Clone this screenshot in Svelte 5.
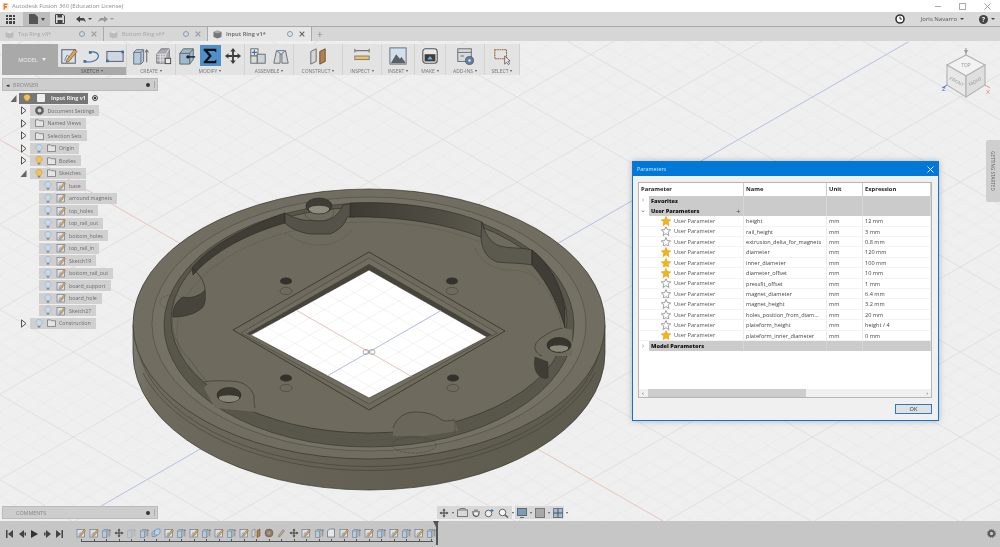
<script>
  const OX = 369, OY = 352, A = 0.575;
  function lines(step, from, to) {
    const out = [];
    for (let k = from; k <= to; k++) {
      const d = k * step;
      out.push([0, OY + A * (0 - OX) + d, 1000, OY + A * (1000 - OX) + d]);
      out.push([0, OY - A * (0 - OX) + d, 1000, OY - A * (1000 - OX) + d]);
    }
    return out;
  }
  const minor = lines(17, -50, 50);
  const major = lines(85, -10, 10);

  const tree = [
    { d: 0, exp: 'r', icon: 'gear', label: 'Document Settings' },
    { d: 0, exp: 'r', icon: 'folder', label: 'Named Views' },
    { d: 0, exp: 'r', icon: 'folder', label: 'Selection Sets' },
    { d: 0, exp: 'r', bulb: 'off', icon: 'folder', label: 'Origin' },
    { d: 0, exp: 'r', bulb: 'on', icon: 'folder', label: 'Bodies' },
    { d: 0, exp: 'd', bulb: 'on', icon: 'folder', label: 'Sketches' },
    ...['base', 'arround magnets', 'top_holes', 'top_rail_out', 'bottom_holes', 'top_rail_in', 'Sketch19', 'bottom_rail_out', 'board_support', 'board_hole', 'Sketch27'].map((label) => ({ d: 1, bulb: 'off', icon: 'sketch', label })),
    { d: 0, exp: 'r', bulb: 'off', icon: 'folder', label: 'Construction' }
  ];

  const params = [
    ['height', '12 mm', 1], ['rail_height', '3 mm', 0], ['extrusion_delta_for_magnets', '0.8 mm', 0],
    ['diameter', '120 mm', 1], ['inner_diameter', '100 mm', 1], ['diameter_offset', '10 mm', 1],
    ['pressfit_offset', '1 mm', 0], ['magnet_diameter', '6.4 mm', 0], ['magnet_height', '3.2 mm', 0],
    ['holes_position_from_diam...', '20 mm', 0], ['plateform_height', 'height / 4', 0], ['plateform_inner_diameter', '0 mm', 1]
  ];

  const ribbon = [
    { label: 'SKETCH', w: 69, dark: true, icons: ['sketch', 'arc', 'rect'] },
    { label: 'CREATE', w: 49, icons: ['extrude', 'grid'] },
    { label: 'MODIFY', w: 69, icons: ['press', 'sigma', 'move'] },
    { label: 'ASSEMBLE', w: 49, icons: ['joint', 'assem'] },
    { label: 'CONSTRUCT', w: 49, icons: ['plane'] },
    { label: 'INSPECT', w: 39, icons: ['measure'] },
    { label: 'INSERT', w: 33, icons: ['picture'] },
    { label: 'MAKE', w: 31, icons: ['make'] },
    { label: 'ADD-INS', w: 39, icons: ['addin'] },
    { label: 'SELECT', w: 35, icons: ['select'] }
  ];

  const tl = ['sketch','sketch','extrude','move','extrudeL','extrude','combine','sketch','extrude','sketch','extrude','sketch','extrude','sketch','plane','thread','pen','move','sketch','extrude','fillet','sketch','extrude','sketch','extrude','sketch','extrude','sketch','extrude'];

  const smallHoles = [[286, 281], [452, 281], [286, 378], [453, 378]];
</script>

{#snippet icon(k, s)}
  <svg class="ic" width={s} height={s} viewBox="0 0 20 20">
    {#if k === 'sketch'}
      <rect x="2" y="3" width="15" height="15" fill="#d9e2ea" stroke="#667" stroke-width="1.2"/>
      <path d="M5 15 L8 9 L13 13" fill="none" stroke="#5a7fa5" stroke-width="1"/>
      <path d="M7 15 L16 3 L19 5 L10 16 L7 17Z" fill="#e8a33a" stroke="#555" stroke-width=".7"/>
    {:else if k === 'arc'}
      <path d="M2 16 C8 18 18 15 17 9 C16 5 10 5 8 6" fill="none" stroke="#3c6fa8" stroke-width="1.3"/>
      <rect x="0.5" y="14.5" width="3" height="3" fill="#3c6fa8"/><rect x="6.5" y="4.5" width="3" height="3" fill="#3c6fa8"/>
    {:else if k === 'rect'}
      <rect x="1" y="5" width="18" height="11" fill="#cfd8e0" stroke="#667" stroke-width="1.2"/>
      <rect x="0" y="14" width="3" height="3" fill="#3c6fa8"/><rect x="17" y="4" width="3" height="3" fill="#3c6fa8"/>
    {:else if k === 'extrude' || k === 'extrudeL'}
      <g opacity={k === 'extrudeL' ? .35 : 1}>
        <path d="M3 6 L6 3 L14 3 L14 16 L11 19 L3 19Z" fill="#b7cbdc" stroke="#5d6d7a" stroke-width="1"/>
        <path d="M3 6 L11 6 L14 3 M11 6 L11 19" fill="none" stroke="#5d6d7a" stroke-width="1"/>
        <path d="M17.5 17 V4 M15.7 6 L17.5 3 L19.3 6" fill="none" stroke="#555" stroke-width="1"/>
      </g>
    {:else if k === 'grid'}
      <path d="M3 8 L8 2 H17 V12 L12 18 H3Z" fill="#a9a9b5" stroke="#777" stroke-width="1"/>
      <path d="M3 11 H13 M3 14.5 H13 M7 8 V18 M10 8 V18 M3 8 H13 L17 2 M13 8 V18" stroke="#f2f2f2" stroke-width=".8" fill="none"/>
      <rect x="12.5" y="12.5" width="6" height="6" fill="#e8e8e8" stroke="#444"/>
    {:else if k === 'press'}
      <path d="M2 7 L6 2 H17 V14 L13 19 H2Z" fill="#9fb9cf" stroke="#566" stroke-width="1"/>
      <path d="M2 7 H13 L17 2 M13 7 V19" fill="none" stroke="#566" stroke-width="1"/>
      <path d="M11 11 H19" stroke="#222" stroke-width="1.6"/><circle cx="11" cy="11" r="1.8" fill="#222"/>
    {:else if k === 'sigma'}
      <path d="M3 2 H17 V6 L15 4.5 H7.5 L12 10 L7 15.5 H15 L17 14 V18 H3 V16.5 L8.8 10 L3 3.5Z" fill="#111"/>
    {:else if k === 'move'}
      <path d="M10 1 L13 5 H11 V9 H15 V7 L19 10 L15 13 V11 H11 V15 H13 L10 19 L7 15 H9 V11 H5 V13 L1 10 L5 7 V9 H9 V5 H7Z" fill="#3d3d3d"/>
    {:else if k === 'joint'}
      <rect x="2" y="2" width="8" height="8" fill="#e8e8e8" stroke="#666"/>
      <rect x="9" y="8" width="9" height="10" fill="#c9d3db" stroke="#666"/>
      <rect x="2" y="10" width="7" height="8" fill="#dcdcdc" stroke="#666"/>
      <path d="M6 3 V9 M3 6 H9" stroke="#3c6fa8" stroke-width="1.2"/>
    {:else if k === 'assem'}
      <path d="M2 18 L5 4 L9 7 L9 18Z M18 18 L15 4 L11 7 L11 18Z" fill="#d5d9de" stroke="#666" stroke-width="1"/>
      <path d="M9 8 L11 8 M6 4 L14 4" stroke="#3c6fa8" stroke-width="1"/>
    {:else if k === 'plane'}
      <path d="M2 5 L8 2 V16 L2 19Z" fill="#d5d5d5" stroke="#666" stroke-width="1"/>
      <path d="M12 5 L18 2 V16 L12 19Z" fill="#b08250" stroke="#6a4a25" stroke-width="1"/>
    {:else if k === 'measure'}
      <path d="M2 4 H18 M2 2 V6 M18 2 V6" stroke="#777" stroke-width="1.2" fill="none"/>
      <rect x="2" y="10" width="16" height="4" fill="#f0c060" stroke="#777" stroke-width="1"/>
    {:else if k === 'picture'}
      <rect x="1" y="1" width="18" height="18" fill="#cfe0ee" stroke="#666"/>
      <path d="M2 18 L8 8 L12 13 L14 11 L18 17 V18Z" fill="#5c5f66"/>
    {:else if k === 'make'}
      <rect x="2" y="2" width="16" height="16" rx="3" fill="#e8e8e8" stroke="#555" stroke-width="1.2"/>
      <rect x="4" y="8" width="12" height="8" fill="#3d3d3d"/><path d="M7 14 L10 10 L13 14Z" fill="#6cb2e8"/>
    {:else if k === 'addin'}
      <rect x="2" y="2" width="15" height="14" fill="#d5dbe0" stroke="#666"/>
      <path d="M2 6 H17 M5 10 H9" stroke="#666" stroke-width="1"/>
      <circle cx="15" cy="15" r="4.5" fill="#5c7fa5" stroke="#444" stroke-width=".7"/><circle cx="15" cy="15" r="1.3" fill="#eee"/>
    {:else if k === 'select'}
      <rect x="2" y="3" width="13" height="10" fill="none" stroke="#9a6a3a" stroke-width="1.2" stroke-dasharray="2 .6"/>
      <path d="M13 10 L13 19 L15 17 L17 19.5 L18.5 18.5 L16.5 16 L19 15.5Z" fill="#eee" stroke="#444" stroke-width=".8"/>
    {:else if k === 'combine'}
      <path d="M2 9 L6 5 H13 V13 L9 17 H2Z" fill="#a7c4e0" stroke="#4d6d8d"/>
      <path d="M7 6 L11 2 H18 V10 L14 14 H7Z" fill="#b9d2e8" stroke="#4d6d8d"/>
    {:else if k === 'thread'}
      <circle cx="10" cy="10" r="8" fill="#8d7a68" stroke="#555"/><circle cx="10" cy="10" r="3.5" fill="#b89878"/>
    {:else if k === 'pen'}
      <path d="M4 17 L14 3 L17 6 L7 18Z" fill="#c9a87a" stroke="#666" stroke-width="1"/>
    {:else if k === 'fillet'}
      <path d="M3 18 V8 C3 4 6 2 10 2 H17 V18Z" fill="#e4e8ec" stroke="#555" stroke-width="1.2"/>
    {/if}
  </svg>
{/snippet}

{#snippet bulb(on)}
  <svg class="ic" width="8" height="9" viewBox="0 0 9 10">
    <path d="M4.5 .5 C7 .5 8 2.2 8 3.7 C8 5.3 6.3 6 6 7.5 H3 C2.7 6 1 5.3 1 3.7 C1 2.2 2 .5 4.5 .5Z" fill={on ? '#f2c14e' : '#c6d9ea'} stroke={on ? '#c98f1a' : '#8aa6bf'} stroke-width=".6"/>
    <rect x="3" y="8" width="3" height="1.5" fill="#777"/>
  </svg>
{/snippet}

{#snippet folder()}
  <svg class="ic" width="9" height="8" viewBox="0 0 10 9"><path d="M.5 1 H4 L5 2 H9.5 V8.5 H.5Z" fill="#e4e4e4" stroke="#666" stroke-width=".8"/></svg>
{/snippet}

{#snippet tri(kind)}
  <svg class="ic" width="7" height="9" viewBox="0 0 7 9">
    {#if kind === 'r'}
      <path d="M1.5 .8 L6 4.5 L1.5 8.2Z" fill="#eee" stroke="#555" stroke-width="1"/>
    {:else}
      <path d="M6.5 1 V8 H.5Z" fill="#666"/>
    {/if}
  </svg>
{/snippet}

{#snippet star(on)}
  <svg class="ic" width="10" height="10" viewBox="0 0 10 10">
    <path d="M5 .5 L6.3 3.6 L9.7 3.9 L7.1 6.1 L7.9 9.5 L5 7.7 L2.1 9.5 L2.9 6.1 L.3 3.9 L3.7 3.6Z" fill={on ? '#f4b41a' : '#fff'} stroke={on ? '#e0a010' : '#777'} stroke-width=".7"/>
  </svg>
{/snippet}

{#snippet gridLines()}
  {#each minor as l}<line x1={l[0]} y1={l[1]} x2={l[2]} y2={l[3]} class="gm"/>{/each}
  {#each major as l}<line x1={l[0]} y1={l[1]} x2={l[2]} y2={l[3]} class="gM"/>{/each}
  <line x1="0" y1={OY - A * OX} x2="1000" y2={OY + A * (1000 - OX)} class="axr"/>
  <line x1="80" y1={OY + A * (OX - 80)} x2="908" y2={OY - A * (908 - OX)} class="axb"/>
{/snippet}

<div class="app">
  <header class="title">
    <svg class="ic logo" width="7" height="9" viewBox="0 0 9 10"><rect width="9" height="10" fill="#f2f2f2"/><path d="M2 1 H7 V3 H4 V4.5 H6.5 V6.5 H4 V9 H2Z" fill="#e0811f"/></svg>
    <span>Autodesk Fusion 360 (Education License)</span>
    <div class="winbtns">
      <i class="min"></i><i class="max"></i>
      <svg width="7" height="7" viewBox="0 0 7 7"><path d="M.5 .5 L6.5 6.5 M6.5 .5 L.5 6.5" stroke="#999" stroke-width=".9"/></svg>
    </div>
  </header>

  <div class="tools">
    <div class="apps">{#each Array(9) as _}<b></b>{/each}</div>
    <div class="file">
      <svg class="ic" width="9" height="10" viewBox="0 0 9 10"><path d="M0 0 H6 L9 3 V10 H0Z" fill="#555"/></svg><em class="caret"></em>
    </div>
    <svg class="ic save" width="10" height="10" viewBox="0 0 10 10"><path d="M.5 .5 H8 L9.5 2 V9.5 H.5Z" fill="none" stroke="#444" stroke-width="1"/><rect x="2.5" y="1" width="4.5" height="2.5" fill="#444"/><rect x="2.5" y="6" width="5" height="3.5" fill="#444"/></svg>
    <svg class="ic undo" width="10" height="7" viewBox="0 0 10 7"><path d="M0 3 L4 0 V2 H8 L10 6 L7.5 4.5 H4 V6.5Z" fill="#444"/></svg><em class="caret sm"></em>
    <svg class="ic redo" width="10" height="7" viewBox="0 0 10 7"><path d="M10 3 L6 0 V2 H2 L0 6 L2.5 4.5 H6 V6.5Z" fill="#999"/></svg><em class="caret sm lt"></em>
    <div class="tools-r">
      <svg class="ic" width="10" height="10" viewBox="0 0 10 10"><circle cx="5" cy="5" r="4" fill="#fff" stroke="#333" stroke-width="1.6"/><path d="M5 2.5 V5 H7" stroke="#333" fill="none"/></svg>
      <span class="user">Joris Navarro</span><em class="caret sm"></em>
      <span class="help">?</span><em class="caret sm"></em>
    </div>
  </div>

  <nav class="tabs">
    {#each ['Top Ring v8*', 'Bottom Ring v6*', 'Input Ring v1*'] as t, i}
      <div class="tab" class:active={i === 2}>
        <svg class="ic" width="9" height="9" viewBox="0 0 9 9"><path d="M4.5 .5 L8.5 2 V7 L4.5 8.5 L.5 7 V2Z" fill={i === 2 ? '#777' : '#bbb'}/><path d="M.5 2 L4.5 3.5 L8.5 2 L4.5 .5Z" fill={i === 2 ? '#aaa' : '#ddd'}/></svg>
        <span class="tname">{t}</span>
        <i class="dot"></i>
        <svg class="ic" width="6" height="6" viewBox="0 0 6 6"><path d="M.7 .7 L5.3 5.3 M5.3 .7 L.7 5.3" stroke={i === 2 ? '#666' : '#999'} stroke-width="1.2"/></svg>
      </div>
    {/each}
    <span class="plus">+</span>
  </nav>

  <main class="view">
    <svg class="canvas" viewBox="0 41 1000 480" width="1000" height="480">
      <defs>
        <clipPath id="hole"><path d="M369 270 L487 337 L369 398 L251 335Z"/></clipPath>
        <linearGradient id="side" x1="0" x2="1" y1="0" y2="0">
          <stop offset="0" stop-color="#7a786e"/><stop offset=".04" stop-color="#6e6a5d"/><stop offset=".5" stop-color="#635f53"/><stop offset="1" stop-color="#5d5a4e"/>
        </linearGradient>
        <linearGradient id="wall" x1="0" x2="1" y1="0" y2="0">
          <stop offset="0" stop-color="#3d3b33"/><stop offset=".6" stop-color="#4d4b41"/><stop offset="1" stop-color="#5b584e"/>
        </linearGradient>
      </defs>
      <rect x="0" y="41" width="1000" height="480" fill="#efefef"/>
      {@render gridLines()}

      <!-- body side -->
      <path d="M133 325 V353 A236 137 0 0 0 605 353 V325Z" fill="url(#side)" stroke="#35332c" stroke-width=".7"/>
      <path d="M143 373 A236 137 0 0 0 595 373 M138 350 A233 134 0 0 0 600 350" fill="none" stroke="#3a382f" stroke-width=".5"/>

      <!-- top rim -->
      <ellipse cx="369" cy="324" rx="236" ry="135" fill="#716d60" stroke="#35332c" stroke-width=".7"/>
      <ellipse cx="369" cy="324" rx="217" ry="127" fill="#757165" stroke="#45433a" stroke-width=".5"/>

      <!-- channel, floor -->
      <ellipse cx="369" cy="325" rx="205" ry="122" fill="#59564b" stroke="#35332c" stroke-width=".6"/>
      <ellipse cx="369" cy="320" rx="198" ry="113" fill="#6e6a5d" stroke="#33312a" stroke-width=".7"/>
      <ellipse cx="369" cy="331" rx="192" ry="109" fill="none" stroke="#55534a" stroke-width=".5" stroke-dasharray="3 1"/>

      <!-- back walls -->
      <path d="M192 268 C210 245 250 225 285 213 L285 223 C250 233 215 250 193 275Z" fill="#3f3d35" stroke="#2a2924" stroke-width=".6"/>
      <path d="M285 213 C292 217 298 219 303 220 L320 221 C332 221 339 214 343 205 L353 203 L355 217 L347 217 C345 224 340 230 330 234 L310 234 C298 232 290 228 285 223Z" fill="#55524a" stroke="#2a2924" stroke-width=".6"/>
      <path d="M350 203 C395 201 445 207 482 222 C485 228 484 233 481 237 C445 223 395 216 350 217Z" fill="url(#wall)" stroke="#2a2924" stroke-width=".6"/>
      <path d="M482 222 C484 232 490 243 500 246 C510 249 522 247 532 250 V265 C522 263 505 263 497 262 C488 258 482 252 481 237Z" fill="#5c594f" stroke="#2a2924" stroke-width=".6"/>
      <path d="M532 250 C548 262 560 282 565 308 L565 328 C560 310 550 285 532 265Z" fill="#3f3d35" stroke="#2a2924" stroke-width=".6"/>
      <path d="M183 297 C190 299 200 296 205 290 C206 298 205 305 202 308 C195 314 185 317 173 317 C172 310 175 302 183 297Z" fill="#46443b" stroke="#2a2924" stroke-width=".6"/>
      <path d="M192 268 C200 275 205 282 205 290" fill="none" stroke="#2a2924" stroke-width=".6"/>
      <path d="M173 317 C170 330 176 345 190 360 L207 382" fill="none" stroke="#4a4840" stroke-width=".5"/>
      <ellipse cx="172" cy="302" rx="12" ry="7" fill="none" stroke="#4d4b41" stroke-width=".5" stroke-dasharray="2 1"/>
      <path d="M475 248 C480 262 495 270 510 270 C525 270 535 275 540 285" fill="none" stroke="#55534a" stroke-width=".5" stroke-dasharray="3 1"/>
      <path d="M285 232 C295 240 305 245 320 245 C335 245 345 238 352 230" fill="none" stroke="#55534a" stroke-width=".5" stroke-dasharray="3 1"/>

      <!-- bosses around the screw holes: only the inner side has an edge -->
      <path d="M204 388 C208 381 218 381 230 381 C242 381 251 386 254 396 L256 412 L215 408 Z" fill="#6e6a5d"/>
      <path d="M204 382 C212 380 222 381 230 381 C242 381 251 386 254 396 C254 402 254 404 255 408" fill="none" stroke="#33312a" stroke-width=".6"/>
      <path d="M563 328 C556 329 550 332 544 336 C538 340 534 344 535 349 C536 352 539 355 542 356 L572 356 L572 330Z" fill="#6e6a5d"/>
      <path d="M563 328 C556 329 550 332 544 336 C538 340 534 344 535 349 C536 352 539 355 542 356" fill="none" stroke="#33312a" stroke-width=".6"/>

      <!-- bottom notch -->
      <path d="M393 428 C396 418 405 412 415 412 C428 412 435 415 442 420 C445 422 452 420 455 420 L458 431 L425 436 L393 436Z" fill="#6a665a"/>
      <path d="M393 428 C396 418 405 412 415 412 C428 412 435 415 442 420 C445 422 452 420 455 420" fill="none" stroke="#33312a" stroke-width=".6"/>
      <ellipse cx="414" cy="445" rx="22" ry="8" fill="none" stroke="#45433a" stroke-width=".5" stroke-dasharray="3 1"/>
      <path d="M455 420 V433" stroke="#45433a" stroke-width=".5"/>

      <!-- screw holes -->
      <ellipse cx="319" cy="206" rx="13" ry="8" fill="#3e3c34" stroke="#2a2924" stroke-width=".6"/>
      <path d="M309 210 A11 6 0 0 0 329 210 L329 208 A11 4 0 0 0 309 208Z" fill="#8e8b7f"/>
      <ellipse cx="319" cy="212" rx="15" ry="9" fill="none" stroke="#46443b" stroke-width=".5"/>
      <ellipse cx="559" cy="345" rx="12" ry="7.5" fill="#37352e" stroke="#2a2924" stroke-width=".6"/>
      <path d="M550 349 A10 5 0 0 0 568 349 L568 347 A10 3 0 0 0 550 347Z" fill="#8a8679"/>
      <path d="M535 357 C532 372 540 380 548 378 L548 362Z" fill="#3f3d35" stroke="#2a2924" stroke-width=".4"/>
      <ellipse cx="229" cy="395" rx="12" ry="7.5" fill="#3a382f" stroke="#2a2924" stroke-width=".6"/>
      <path d="M219 399 A11 5 0 0 0 239 399 L239 397 A11 3 0 0 0 219 397Z" fill="#8a8679"/>
      {#each smallHoles as h}
        <ellipse cx={h[0]} cy={h[1]} rx="6" ry="3.6" fill="#33312b"/>
        <ellipse cx={h[0]} cy={h[1] + 10} rx="6" ry="3.6" fill="none" stroke="#3d3b33" stroke-width=".5"/>
      {/each}

      <!-- square opening -->
      <path d="M369 252 L505 331 L369 410 L233 330Z" fill="#6e6a5d" stroke="#33312a" stroke-width=".8"/>
      <path d="M369 258 L497 333 L369 404 L241 333Z" fill="#716d60" stroke="#3f3d35" stroke-width=".5"/>
      <path d="M369 264 L492 335 L487 337 L369 270 L251 335 L246 334Z" fill="#45433a"/>
      <path d="M369 270 L487 337 L369 398 L251 335Z" fill="#fff" stroke="#33312a" stroke-width=".6"/>
      <g clip-path="url(#hole)">{@render gridLines()}</g>
      <g fill="none" stroke="#8d8d8d" stroke-width=".7">
        <ellipse cx="366" cy="352" rx="3" ry="2.5"/><ellipse cx="372" cy="352" rx="3" ry="2.5"/>
      </g>
    </svg>

    <div class="ribbon">
      <div class="model"><span>MODEL</span><em class="caret wh"></em></div>
      {#each ribbon as g}
        <div class="rgroup" style="width:{g.w}px">
          <div class="ricons">
            {#each g.icons as k}
              <span class="ribbtn" class:on={k === 'sigma'}>{@render icon(k, 18)}</span>
            {/each}
          </div>
          <div class="rlabel" class:dark={g.dark}>{g.label}<em class="caret tiny"></em></div>
        </div>
      {/each}
    </div>

    <section class="browser">
      <div class="panelhead">
        <span class="arrows">◂◂</span><span class="ptitle">BROWSER</span><i class="pin"></i><i class="grip"></i>
      </div>
      <div class="tree">
        <div class="row root">
          {@render tri('d')}
          <div class="pill darkpill">
            {@render bulb(true)}
            <svg class="ic" width="8" height="8" viewBox="0 0 8 8"><rect width="8" height="8" rx="1" fill="#eee"/></svg>
            <span>Input Ring v1</span>
          </div>
          <i class="radio"></i>
        </div>
        {#each tree as n}
          <div class="row" class:child={n.d === 1}>
            {#if n.exp}{@render tri(n.exp)}{/if}
            <div class="pill">
              {#if n.bulb}{@render bulb(n.bulb === 'on')}{/if}
              {#if n.icon === 'gear'}
                <svg class="ic" width="9" height="9" viewBox="0 0 9 9"><circle cx="4.5" cy="4.5" r="3" fill="none" stroke="#555" stroke-width="2"/><circle cx="4.5" cy="4.5" r="4" fill="none" stroke="#555" stroke-width="1" stroke-dasharray="1.2 1"/></svg>
              {:else if n.icon === 'folder'}
                {@render folder()}
              {:else}
                {@render icon('sketch', 10)}
              {/if}
              <span>{n.label}</span>
            </div>
          </div>
        {/each}
      </div>
    </section>

    <svg class="cube" width="50" height="55" viewBox="0 0 50 55">
      <path d="M24 0 V12" stroke="#999" stroke-width="1"/>
      <path d="M22 2 H26 L24 6Z" fill="#999"/>
      <path d="M5 17 L24 7 L43 17 L24 28Z" fill="#f2f2f2" stroke="#b5b5b5" stroke-width="1.2"/>
      <path d="M5 17 L24 28 V49 L5 37Z" fill="#e8e8e8" stroke="#b5b5b5" stroke-width="1.2"/>
      <path d="M43 17 L24 28 V49 L43 37Z" fill="#dedede" stroke="#b5b5b5" stroke-width="1.2"/>
      <path d="M5 37 L0 40" stroke="#5a78c8" stroke-width="1"/>
      <path d="M43 37 L48 40" stroke="#e09a8a" stroke-width="1"/>
      <text x="0" y="43" class="cz">Z</text><text x="44" y="46" class="cx">X</text>
      <text x="24" y="19" class="ct" text-anchor="middle">TOP</text>
      <text x="14" y="35" class="ct" text-anchor="middle" transform="rotate(28 14 35)">FRONT</text>
      <text x="34" y="35" class="ct" text-anchor="middle" transform="rotate(-28 34 35)">RIGHT</text>
    </svg>

    <aside class="start"><span>GETTING STARTED</span></aside>

    <div class="dialog">
      <div class="dtitle"><span>Parameters</span>
        <svg width="7" height="7" viewBox="0 0 7 7"><path d="M.5 .5 L6.5 6.5 M6.5 .5 L.5 6.5" stroke="#fff" stroke-width=".9"/></svg>
      </div>
      <div class="dbody">
        <div class="table">
          <div class="trow thead"><span>Parameter</span><span>Name</span><span>Unit</span><span>Expression</span></div>
          <div class="trow tgroup"><span class="gname"><i class="chev">›</i><b>Favorites</b></span><span></span><span></span><span></span></div>
          <div class="trow tgroup"><span class="gname"><i class="chev open">›</i><b>User Parameters</b><u>+</u></span><span></span><span></span><span></span></div>
          {#each params as p}
            <div class="trow item">
              <span class="pcol">{@render star(p[2])}<span class="ptype">User Parameter</span></span>
              <span>{p[0]}</span><span>mm</span><span>{p[1]}</span>
            </div>
          {/each}
          <div class="trow tgroup"><span class="gname"><i class="chev">›</i><b>Model Parameters</b></span><span></span><span></span><span></span></div>
          <div class="spacer"></div>
          <div class="hscroll"><i class="l">‹</i><div class="thumb"></div><i class="r">›</i></div>
        </div>
        <div class="dfoot"><button>OK</button></div>
      </div>
    </div>

    <section class="comments">
      <div class="panelhead"><span class="ptitle c">COMMENTS</span><i class="pin"></i><i class="grip"></i></div>
    </section>

    <div class="navbar">
      <div class="navg g1">
        {@render icon('move', 10)}<em class="caret tiny"></em>
        <svg class="ic" width="11" height="9" viewBox="0 0 11 9"><rect x=".5" y="2" width="10" height="6.5" fill="none" stroke="#777"/><path d="M2 2 L3 .5 H8 L9 2" fill="none" stroke="#777"/></svg>
        <svg class="ic" width="10" height="10" viewBox="0 0 10 10"><path d="M2 5 V3 M4 4 V1.5 M6 4 V1.5 M8 5 V3 M2 5 C2 9 8 10 8 5" fill="#eee" stroke="#555" stroke-width="1.1"/></svg>
        <svg class="ic" width="11" height="10" viewBox="0 0 11 10"><circle cx="4.5" cy="5.5" r="3.3" fill="#eee" stroke="#666"/><path d="M8 1 V4 M6.5 2.5 H9.5" stroke="#3c6fa8"/></svg>
        <svg class="ic" width="11" height="10" viewBox="0 0 11 10"><circle cx="4.5" cy="4.5" r="3.3" fill="#f5f5f5" stroke="#666"/><path d="M7 7 L10 9.5" stroke="#555" stroke-width="1.4"/></svg><em class="caret tiny"></em>
      </div>
      <div class="navg g2">
        <svg class="ic" width="10" height="10" viewBox="0 0 10 10"><rect x=".5" y=".5" width="9" height="7" fill="#7a9cbe" stroke="#666"/><path d="M3 9.5 H7" stroke="#666"/></svg><em class="caret tiny"></em>
        <svg class="ic" width="10" height="10" viewBox="0 0 10 10"><rect x=".5" y=".5" width="9" height="9" fill="#a8a8a8" stroke="#777"/></svg><em class="caret tiny"></em>
        <svg class="ic" width="10" height="10" viewBox="0 0 10 10"><rect x=".5" y=".5" width="9" height="9" fill="#9fbcd8" stroke="#777"/><path d="M5 .5 V9.5 M.5 5 H9.5" stroke="#555"/></svg><em class="caret tiny"></em>
      </div>
    </div>
  </main>

  <footer class="timeline">
    <div class="controls">
      <svg width="7" height="8" viewBox="0 0 7 8"><path d="M0 0 H1.5 V8 H0Z M7 0 V8 L2 4Z" fill="#444"/></svg>
      <svg width="7" height="8" viewBox="0 0 7 8"><path d="M5 0 V8 L0 4Z M5.5 2.5 H7 V5.5 H5.5Z" fill="#444"/></svg>
      <svg width="7" height="8" viewBox="0 0 7 8"><path d="M0 0 L7 4 L0 8Z" fill="#333"/></svg>
      <svg width="7" height="8" viewBox="0 0 7 8"><path d="M2 0 V8 L7 4Z M0 2.5 H1.5 V5.5 H0Z" fill="#444"/></svg>
      <svg width="7" height="8" viewBox="0 0 7 8"><path d="M0 0 V8 L5 4Z M5.5 0 H7 V8 H5.5Z" fill="#444"/></svg>
    </div>
    <div class="track">
      <div class="steps">
        {#each tl as k}<span class="step">{@render icon(k, 10)}</span>{/each}
      </div>
      <div class="rail">{#each tl as _}<i></i>{/each}</div>
      <div class="marker"></div>
    </div>
    <svg class="gearbtn" width="9" height="9" viewBox="0 0 9 9"><circle cx="4.5" cy="4.5" r="2.6" fill="none" stroke="#555" stroke-width="1.8"/><circle cx="4.5" cy="4.5" r="4" fill="none" stroke="#555" stroke-width="1" stroke-dasharray="1.2 1"/></svg>
  </footer>
</div>

<style>
  :global(body) { margin: 0; }
  .app {
    width: 1000px; height: 547px; display: flex; flex-direction: column; overflow: hidden;
    font-family: "Open Sans", "Noto Sans", "Liberation Sans", sans-serif; color: #666; background: #efefef;
    filter: blur(.3px);
  }
  .ic { display: block; flex: none; }
  em, i, u { font-style: normal; text-decoration: none; }
  .caret { width: 0; height: 0; border-left: 2.5px solid transparent; border-right: 2.5px solid transparent; border-top: 3px solid #444; flex: none; display: inline-block; }
  .caret.sm { border-left-width: 2px; border-right-width: 2px; border-top-width: 2.5px; }
  .caret.lt { border-top-color: #999; }
  .caret.wh { border-top-color: #eee; margin-left: 4px; }
  .caret.tiny { border-left-width: 1.5px; border-right-width: 1.5px; border-top-width: 2px; border-top-color: #555; }

  .title { height: 12px; background: #fff; display: flex; align-items: center; padding: 0 0 0 2px; gap: 3px; font-size: 5.9px; color: #8a8a8a; flex: none; }
  .winbtns { margin-left: auto; display: flex; align-items: center; gap: 18px; padding-right: 9px; }
  .min { width: 6px; height: 1px; background: #aaa; }
  .max { width: 5px; height: 5px; border: 1px solid #aaa; }

  .tools { height: 14px; background: #d9d9d9; border-bottom: 1px solid #a9a9a9; display: flex; align-items: center; flex: none; }
  .apps { width: 9px; height: 9px; margin-left: 6px; display: grid; grid-template-columns: repeat(3, 1fr); gap: 1px; }
  .apps b { background: #444; }
  .file { margin-left: 8px; width: 27px; height: 14px; background: #bdbdbd; display: flex; align-items: center; gap: 3px; padding-left: 6px; box-sizing: border-box; }
  .save { margin-left: 5px; }
  .undo { margin-left: 11px; margin-right: 2px; }
  .redo { margin-left: 6px; margin-right: 2px; }
  .tools-r { margin-left: auto; display: flex; align-items: center; padding-right: 5px; gap: 3px; }
  .user { font-size: 6px; color: #555; margin-left: 13px; }
  .help { margin-left: 12px; width: 9px; height: 9px; border-radius: 50%; background: #444; color: #eee; font-size: 7px; font-weight: 700; line-height: 9px; text-align: center; }

  .tabs { height: 14px; background: #d6d6d6; display: flex; align-items: stretch; flex: none; }
  .tab { border-right: 1px solid #aaa; display: flex; align-items: center; padding: 0 6px 0 5px; box-sizing: content-box; width: 92px; gap: 4px; }
  .tab.active { background: #e6e6e6; }
  .tname { font-size: 5.6px; color: #a5a5a5; flex: 1; }
  .active .tname { color: #777; font-weight: 700; }
  .dot { width: 4px; height: 4px; border: 1px solid #7f9db8; border-radius: 50%; margin-right: 2px; }
  .plus { margin-left: 5px; font-size: 10px; line-height: 14px; color: #888; }

  .view { flex: 1; position: relative; overflow: hidden; }
  .canvas { position: absolute; left: 0; top: 0; display: block; }
  .gm { stroke: #e7e7e7; stroke-width: .5; }
  .gM { stroke: #dcdcdc; stroke-width: .7; }
  .axr { stroke: #efc4b8; stroke-width: .8; }
  .axb { stroke: #aebde8; stroke-width: .8; }

  .ribbon { position: absolute; left: 2px; top: 3px; height: 31px; width: 518px; display: flex; background: #e3e3e3; }
  .model { width: 56px; background: #a9a9a9; color: #eee; font-size: 5.6px; display: flex; align-items: center; justify-content: center; padding-left: 4px; box-sizing: border-box; }
  .rgroup { display: flex; flex-direction: column; align-items: stretch; border-right: 1px solid #d2d2d2; box-sizing: border-box; }
  .ricons { flex: 1; display: flex; justify-content: center; align-items: center; gap: 2px; }
  .ribbtn { width: 21px; height: 21px; display: flex; align-items: center; justify-content: center; }
  .ribbtn.on { background: #4f8fca; }
  .rlabel { height: 8px; font-size: 5px; line-height: 8px; color: #777; display: flex; align-items: center; justify-content: center; gap: 2px; }
  .rlabel.dark { background: #a9a9a9; color: #555; }

  .browser { position: absolute; left: 2px; top: 37px; width: 156px; }
  .panelhead { height: 13px; background: #cdcdcd; border: 1px solid #bbb; box-sizing: border-box; display: flex; align-items: center; font-size: 5.4px; color: #888; }
  .arrows { font-size: 5px; color: #444; margin-left: 3px; letter-spacing: -2px; }
  .ptitle { margin-left: 5px; }
  .ptitle.c { margin-left: 13px; }
  .pin { margin-left: auto; width: 4px; height: 4px; border-radius: 50%; background: #333; }
  .grip { width: 1px; height: 7px; background: #aaa; margin: 0 2px 0 4px; }
  .tree { padding-top: 1px; }
  .row { height: 12.5px; display: flex; align-items: center; padding-left: 19px; position: relative; }
  .row > .ic { position: absolute; left: 17.5px; }
  .root > .ic { left: 8px; }
  .pill { height: 11px; background: #cfcfcf; display: flex; align-items: center; gap: 3.5px; padding: 0 5px 0 5px; margin-left: 9px; font-size: 5.3px; color: #666; white-space: nowrap; opacity: .95; }
  .root { padding-left: 8px; }
  .darkpill { background: #707070; color: #f0f0f0; font-weight: 700; margin-left: 9px; padding: 0 3px 0 4px; gap: 6px; width: 62px; box-sizing: content-box; }
  .radio { width: 4px; height: 4px; border: 1px solid #444; background: radial-gradient(#333 40%, #ddd 45%); border-radius: 50%; margin-left: 4px; }
  .child { padding-left: 28px; }

  .cube { position: absolute; left: 942px; top: 7px; }
  .ct { font-size: 4.6px; fill: #999; font-family: "Liberation Sans", sans-serif; }
  .cz { font-size: 6px; fill: #4a6ad0; font-family: "Liberation Sans", sans-serif; }
  .cx { font-size: 6px; fill: #e08a70; font-family: "Liberation Sans", sans-serif; }

  .start { position: absolute; right: 0; top: 99px; width: 14px; height: 62px; background: #cfcfcf; border-radius: 2px 0 0 2px; display: flex; align-items: center; justify-content: center; }
  .start span { transform: rotate(90deg); font-size: 4.6px; white-space: nowrap; color: #666; }

  .dialog { position: absolute; left: 632px; top: 120px; width: 307px; height: 260px; background: #f0f0f0; border: 1px solid #0a78d2; box-sizing: border-box; box-shadow: 0 0 6px rgba(0,0,0,.25); display: flex; flex-direction: column; color: #333; font-size: 5.6px; font-family: "Open Sans", "Noto Sans", sans-serif; }
  .dtitle { height: 14px; background: #0078d7; color: #d5e8f8; display: flex; align-items: center; justify-content: space-between; padding: 0 4px 0 4px; font-size: 5.4px; flex: none; }
  .dbody { flex: 1; padding: 6px 6px 0 5px; display: flex; flex-direction: column; }
  .table { height: 216px; background: #fff; border: 1px solid #b5b5b5; box-sizing: border-box; display: flex; flex-direction: column; }
  .trow { display: grid; grid-template-columns: 105px 83px 36px 1fr; height: 10.4px; line-height: 10.4px; flex: none; }
  .trow > span { padding-left: 2px; border-right: 1px solid #ececec; white-space: nowrap; overflow: hidden; }
  .thead { height: 12.5px; line-height: 12px; font-weight: 700; color: #222; font-size: 5.8px; }
  .thead > span { border-right: 1px solid #ccc; }
  .tgroup { background: linear-gradient(90deg, #fff 0 10px, #cbcbcb 10px); color: #111; }
  .tgroup > span { border-right: 1px solid #d6d6d6; }
  .gname { display: flex; align-items: center; position: relative; padding-left: 12px !important; }
  .gname b { font-size: 5.6px; font-weight: 800; }
  .gname u { position: absolute; left: 97px; font-size: 8px; color: #555; }
  .chev { position: absolute; left: 3px; font-size: 7px; color: #888; }
  .chev.open { transform: rotate(90deg); color: #444; }
  .item { border-bottom: 1px solid #f3f3f3; box-sizing: border-box; color: #444; }
  .item > span { line-height: 10.8px; }
  .pcol { display: flex; align-items: center; gap: 3px; padding-left: 22px !important; color: #555; }
  .ptype { padding-top: 1px; }
  .spacer { flex: 1; }
  .hscroll { height: 8px; background: #f0f0f0; display: flex; align-items: center; position: relative; font-size: 6px; color: #555; flex: none; }
  .hscroll .l { position: absolute; left: 3px; }
  .hscroll .r { position: absolute; right: 3px; }
  .thumb { position: absolute; left: 9px; width: 158px; height: 8px; background: #cdcdcd; }
  .dfoot { flex: 1; display: flex; justify-content: flex-end; align-items: center; }
  button { width: 37px; height: 10px; padding: 0; margin-right: 0; background: #e1e1e1; border: 1.5px solid #2b78c4; font: 5.6px "Open Sans", sans-serif; color: #333; }

  .comments { position: absolute; left: 2px; top: 465px; width: 156px; }
  .navbar { position: absolute; left: 437px; top: 465px; display: flex; gap: 3px; }
  .navg { height: 13px; background: #d8d8d8; display: flex; align-items: center; gap: 3px; padding: 0 2px; }
  .g1 { width: 75px; box-sizing: border-box; justify-content: space-between; }
  .g2 { width: 49px; box-sizing: border-box; justify-content: space-between; }

  .timeline { height: 26px; background: #c6c6c6; display: flex; flex: none; position: relative; }
  .controls { width: 75px; padding-left: 6px; padding-top: 9px; box-sizing: border-box; display: flex; gap: 5.5px; align-items: flex-start; }
  .track { position: relative; width: 360px; padding-top: 6px; box-sizing: border-box; }
  .steps { display: flex; }
  .step { width: 12.5px; height: 11px; display: flex; justify-content: center; align-items: center; flex: none; }
  .rail { margin: 3px 0 0 6px; width: 352px; height: 1px; background: #555; display: flex; position: relative; }
  .rail i { width: 12.5px; flex: none; height: 3px; margin-top: -2px; border-left: 1px solid #555; box-sizing: border-box; }
  .marker { position: absolute; left: 361px; top: 0; width: 1.5px; height: 24px; background: #555; }
  .marker::before { content: ""; position: absolute; left: -3px; top: 0; border-left: 3.7px solid transparent; border-right: 3.7px solid transparent; border-top: 6px solid #555; }
  .gearbtn { position: absolute; right: 4px; top: 8px; }
</style>
